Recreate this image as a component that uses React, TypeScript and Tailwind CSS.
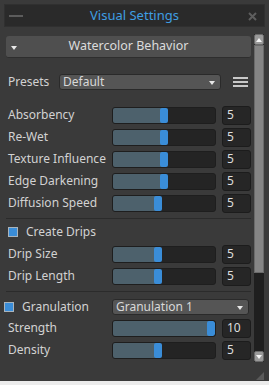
import React from "react";

const font = { fontFamily: '"Noto Sans", "DejaVu Sans", sans-serif' };

type Row = { label: string; value: string; thumb: number };

function Slider({ thumb }: { thumb: number }) {
  return (
    <div className="relative h-[17px] w-[104px] rounded-[3px] border border-[#1e1e1e] bg-[#242424] overflow-hidden">
      <div
        className="absolute left-0 top-0 bottom-0 bg-[#4d616c]"
        style={{ width: thumb + 4 }}
      />
      <div
        className="absolute top-0 bottom-0 w-[8px] rounded-[2px] bg-[#3a8dd8]"
        style={{ left: thumb - 1 }}
      />
    </div>
  );
}

function SliderRow({ row }: { row: Row }) {
  return (
    <div className="flex h-[22px] items-center">
      <div className="w-[106px] pl-[2px] text-[12px] text-[#d2d2d2] whitespace-nowrap">{row.label}</div>
      <Slider thumb={row.thumb} />
      <div className="ml-[6px] flex h-[19px] w-[29px] items-center rounded-[3px] border border-[#1c1c1c] bg-[#262626] pl-[4px] text-[12px] text-[#dedede]">
        {row.value}
      </div>
    </div>
  );
}

function Checkbox() {
  return <div className="h-[10px] w-[10px] border border-[#a9b4bd] bg-[#3a8dd8]" />;
}

function Tri({ className }: { className?: string }) {
  return (
    <svg width="6" height="4" viewBox="0 0 6 4" className={className}>
      <polygon points="0,0 6,0 3,4" fill="#e8e8e8" />
    </svg>
  );
}

export default function App() {
  const main: Row[] = [
    { label: "Absorbency", value: "5", thumb: 48 },
    { label: "Re-Wet", value: "5", thumb: 48 },
    { label: "Texture Influence", value: "5", thumb: 48 },
    { label: "Edge Darkening", value: "5", thumb: 48 },
    { label: "Diffusion Speed", value: "5", thumb: 42 },
  ];
  const drips: Row[] = [
    { label: "Drip Size", value: "5", thumb: 42 },
    { label: "Drip Length", value: "5", thumb: 42 },
  ];
  const gran: Row[] = [
    { label: "Strength", value: "10", thumb: 95 },
    { label: "Density", value: "5", thumb: 42 },
  ];
  return (
    <div className="h-[385px] w-[269px] bg-[#ececec]" style={font}>
      <div className="flex h-[381px] flex-col bg-[#3a3a3a] px-[4px] pt-[4px]">
        {/* title bar */}
        <div className="relative flex h-[23px] items-center justify-center border border-[#303030] bg-[#2a2a2a]">
          <div className="absolute left-[4px] top-[10px] h-[2px] w-[14px] bg-[#5c5c5c]" />
          <span className="text-[13px] text-[#3f9ee2]">Visual Settings</span>
          <svg className="absolute right-[7px] top-[7px]" width="9" height="9" viewBox="0 0 9 9">
            <path d="M1 1 L8 8 M8 1 L1 8" stroke="#5e5e5e" strokeWidth="2" />
          </svg>
        </div>

        <div className="mt-[7px] flex">
          {/* content */}
          <div className="w-[247px] pl-[2px] pt-[2px]">
            <div className="relative flex h-[22px] w-[245px] items-center justify-center rounded-[3px] border-b border-[#2e2e2e] bg-[#4f4f4f]">
              <Tri className="absolute left-[5px] top-[10px]" />
              <span className="text-[12.5px] text-[#dcdcdc]">Watercolor Behavior</span>
            </div>

            <div className="mt-[16px] flex h-[16px] items-center">
              <span className="w-[53px] pl-[2px] text-[12px] text-[#d2d2d2]">Presets</span>
              <div className="relative flex h-[16px] w-[162px] items-center rounded-[3px] border border-[#2a2a2a] bg-[#555555] pl-[3px] text-[12px] text-[#d8d8d8]">
                Default
                <Tri className="absolute right-[5px] top-[6px]" />
              </div>
              <div className="ml-[12px] flex flex-col gap-[2px]">
                <div className="h-[2px] w-[15px] bg-[#c8c8c8]" />
                <div className="h-[2px] w-[15px] bg-[#c8c8c8]" />
                <div className="h-[2px] w-[15px] bg-[#c8c8c8]" />
              </div>
            </div>

            <div className="mt-[14px] flex flex-col">
              {main.map((r) => (
                <SliderRow key={r.label} row={r} />
              ))}
            </div>

            <div className="mt-[4px] h-[1px] w-[245px] bg-[#2b2b2b]" />

            <div className="flex h-[24px] items-center gap-[8px] pl-[2px] pt-[2px]">
              <Checkbox />
              <span className="text-[12px] text-[#d2d2d2]">Create Drips</span>
            </div>
            {drips.map((r) => (
              <SliderRow key={r.label} row={r} />
            ))}

            <div className="mt-[4px] h-[1px] w-[245px] bg-[#2b2b2b]" />

            <div className="mt-[4px] flex h-[21px] items-center">
              <div className="-ml-[2px] flex w-[108px] items-center gap-[8px]">
                <Checkbox />
                <span className="text-[12px] text-[#d2d2d2]">Granulation</span>
              </div>
              <div className="relative flex h-[16px] w-[137px] items-center rounded-[3px] border border-[#2a2a2a] bg-[#555555] pl-[3px] text-[12px] text-[#d8d8d8]">
                Granulation 1
                <Tri className="absolute right-[5px] top-[6px]" />
              </div>
            </div>
            {gran.map((r) => (
              <SliderRow key={r.label} row={r} />
            ))}
          </div>

          {/* scrollbar */}
          <div className="ml-[3px] flex h-[328px] w-[10px] flex-col bg-[#1f1f1f]">
            <div className="flex h-[11px] items-center justify-center rounded-[2px] border border-[#6a6a6a] bg-[#9a9a9a]">
              <svg width="6" height="4" viewBox="0 0 6 4">
                <polygon points="0,4 6,4 3,0" fill="#f4f4f4" />
              </svg>
            </div>
            <div className="h-[228px] w-[10px] border border-[#6a6a6a] bg-[#858585]" />
            <div className="flex-1" />
            <div className="flex h-[11px] items-center justify-center rounded-[2px] border border-[#6a6a6a] bg-[#9a9a9a]">
              <svg width="6" height="4" viewBox="0 0 6 4">
                <polygon points="0,0 6,0 3,4" fill="#f4f4f4" />
              </svg>
            </div>
          </div>
        </div>

        <div className="flex flex-1 items-end justify-end pb-[1px] pr-[1px]">
          <svg width="8" height="8" viewBox="0 0 8 8">
            <polygon points="8,0 8,8 0,8" fill="#5a5a5a" />
          </svg>
        </div>
      </div>
    </div>
  );
}
